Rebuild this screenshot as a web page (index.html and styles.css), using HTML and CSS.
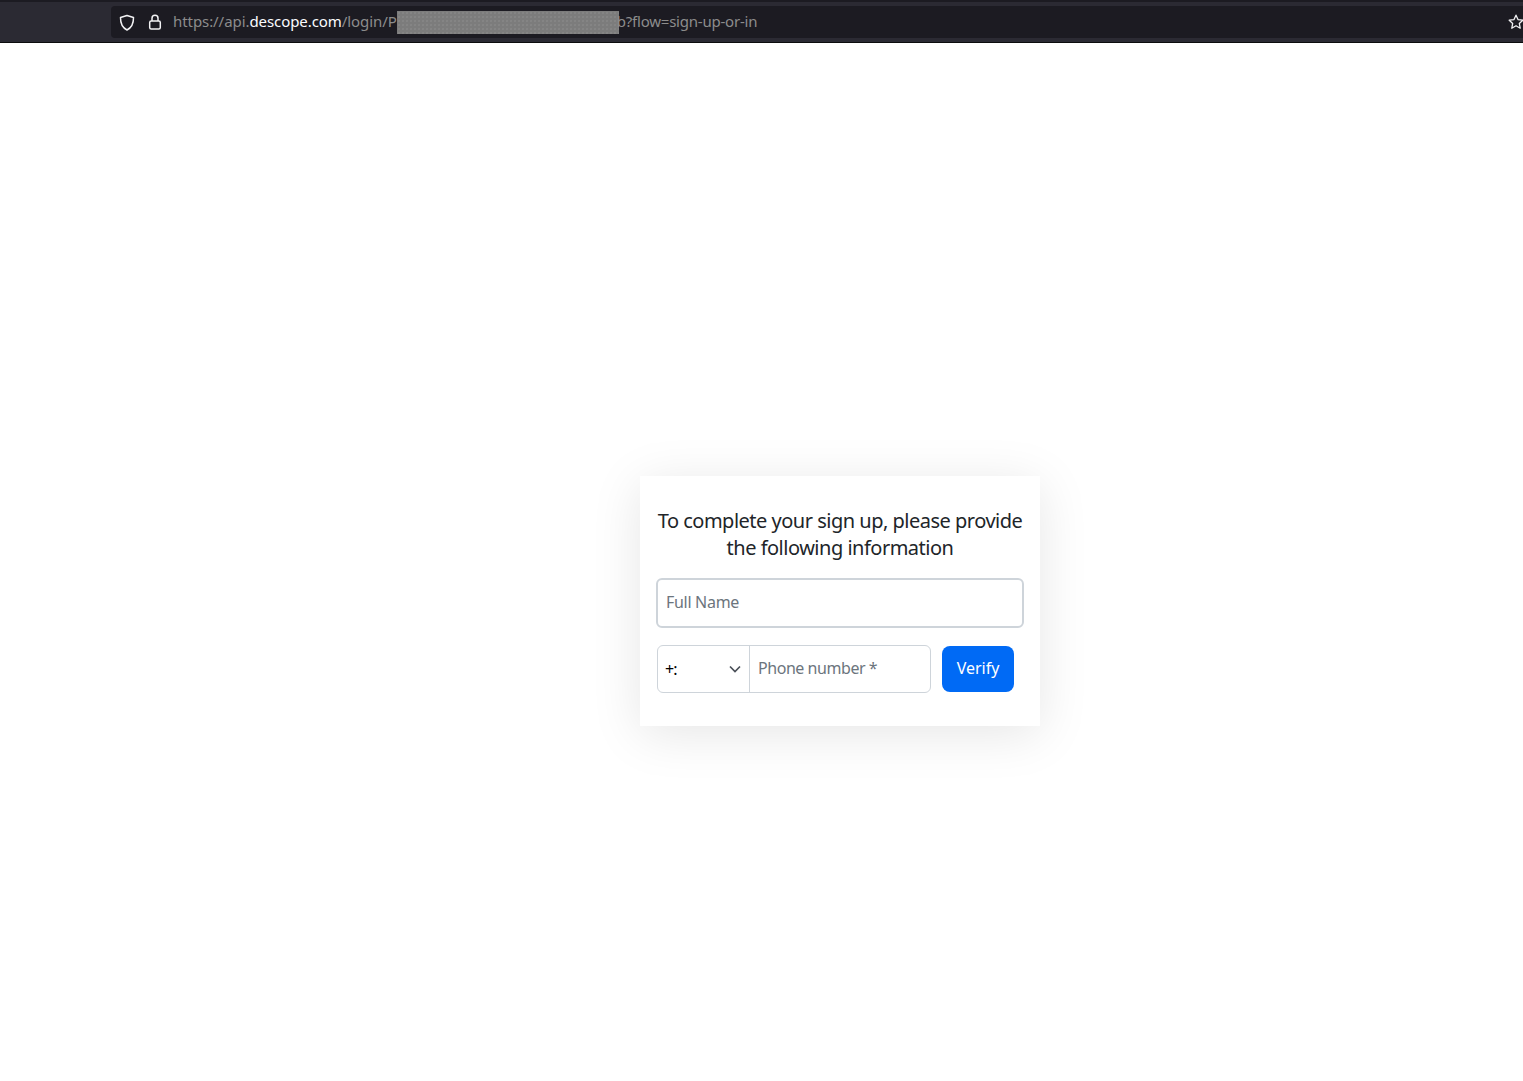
FILE: index.html
```html
<!DOCTYPE html>
<html lang="en">
<head>
<meta charset="utf-8">
<title>Sign up</title>
<link rel="stylesheet" href="styles.css">
</head>
<body>
<header class="toolbar">
  <div class="urlbar">
    <svg class="icon shield" width="16" height="17" viewBox="0 0 16 17" fill="none" stroke="#f2f2f4" stroke-width="1.5"><path d="M8 1.500 14.500 3.500c.1 5.500-1.600 10-6.500 12.500C3.100 13.500 1.400 9 1.500 3.500z" stroke-linejoin="round"/></svg>
    <svg class="icon lock" width="14" height="16" viewBox="0 0 14 16" fill="none" stroke="#f2f2f4" stroke-width="1.5"><rect x="1.700" y="7" width="10.600" height="8" rx="1.500"/><path d="M4 7V4.300a3 3 0 0 1 6 0V7"/></svg>
    <div class="url"><span class="dim">https://api.</span><span class="host">descope.com</span><span class="dim">/login/P</span><span class="redact"></span><span class="dim tail">b?flow=sign-up-or-in</span></div>
    <svg class="star" width="16" height="16" viewBox="0 0 16 16" fill="none" stroke="#f2f2f4" stroke-width="1.3" stroke-linejoin="round"><path d="M8 1.200 10 5.600 14.800 6.200 11.300 9.400 12.200 14.200 8 11.800 3.800 14.200 4.700 9.400 1.200 6.200 6 5.600z"/></svg>
  </div>
</header>
<main class="card">
  <h1 class="title">To complete your sign up, please provide the following information</h1>
  <div class="name-field">Full Name</div>
  <div class="phone-row">
    <div class="phone-group">
      <div class="code"><span class="code-text">+:</span>
        <svg class="chev" width="12" height="8" viewBox="0 0 12 8" fill="none" stroke="#4a5058" stroke-width="1.7"><path d="M1 1.500 6 6.500 11 1.500"/></svg>
      </div>
      <div class="phone">Phone number *</div>
    </div>
    <button class="verify" type="button">Verify</button>
  </div>
</main>
</body>
</html>
```
FILE: styles.css
```css
* { box-sizing: border-box; }
html, body { margin: 0; background: #fff; }
body { min-height: 1081px; overflow: hidden; font-family: "Noto Sans", "Open Sans", sans-serif; }

.toolbar {
  height: 43px;
  padding: 4px 0 0 111px;
  background: #2b2a33;
  border-top: 2px solid #1c1b22;
  border-bottom: 1px solid #0c0c0d;
}
.urlbar {
  display: flex;
  align-items: center;
  height: 32px;
  background: #1c1b22;
  border-radius: 4px 0 0 4px;
  padding-left: 8px;
}
.icon { flex: none; }
.lock { margin-left: 13px; }
.url {
  display: flex;
  align-items: center;
  margin-left: 11px;
  padding-bottom: 3px;
  font-size: 15px;
  letter-spacing: -.07px;
  white-space: nowrap;
  flex: 1;
}
.dim { color: #8c8c8c; }
.host { color: #fbfbfe; }
.tail { letter-spacing: -.22px; }
.redact {
  display: block;
  width: 222px;
  height: 23px;
  margin: 4px -2px 0 0;
  background-color: #7c7c7c;
  background-image: radial-gradient(circle, rgba(255, 255, 255, .07) 0.7px, transparent 0.8px);
  background-size: 4px 4px;
}
.star { flex: none; margin-right: -1px; }

.card {
  width: 400px;
  height: 250px;
  margin: 433px 0 0 640px;
  padding: 31px 16px 0;
  background: #fff;
  box-shadow: 0 8px 48px rgba(0, 0, 0, .1);
}
.title {
  margin: 0;
  font-size: 20px;
  font-weight: 400;
  line-height: 27px;
  letter-spacing: -.5px;
  text-align: center;
  color: #212529;
}
.name-field {
  display: flex;
  align-items: center;
  height: 50px;
  margin-top: 17px;
  padding: 0 0 2px 8px;
  font-size: 16px;
  letter-spacing: -.3px;
  color: #6c757d;
  border: 2px solid #ced4da;
  border-radius: 6px;
}
.phone-row {
  display: flex;
  align-items: center;
  margin: 17px 0 0 1px;
}
.phone-group {
  display: flex;
  width: 274px;
  height: 48px;
  border: 1px solid #ced4da;
  border-radius: 6px;
}
.code {
  display: flex;
  align-items: center;
  justify-content: space-between;
  width: 92px;
  padding: 0 8px 0 7px;
  border-right: 1px solid #ced4da;
}
.code-text {
  font-size: 16px;
  letter-spacing: -1px;
  color: #000;
}
.phone {
  display: flex;
  align-items: center;
  padding: 0 0 2px 8px;
  font-size: 16px;
  letter-spacing: -.45px;
  color: #6c757d;
}
.verify {
  width: 72px;
  height: 46px;
  margin-left: 11px;
  padding: 0 0 2px;
  font: inherit;
  font-size: 16px;
  color: #fff;
  background: #006af5;
  border: 0;
  border-radius: 8px;
}
```
